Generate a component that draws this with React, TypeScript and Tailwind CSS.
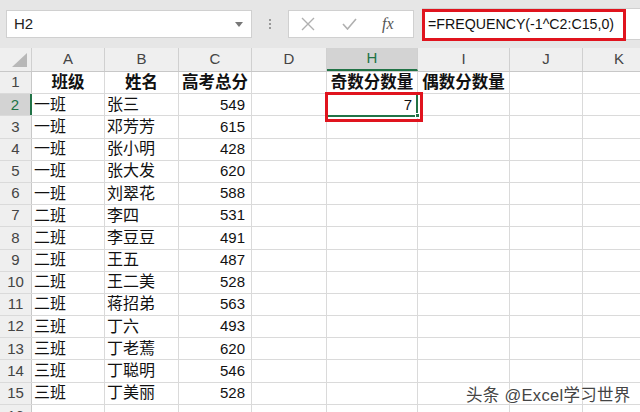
import React from 'react';

const cols = [
  { key: 'A', w: 'w-[73px]' },
  { key: 'B', w: 'w-[74px]' },
  { key: 'C', w: 'w-[73px]' },
  { key: 'D', w: 'w-[75px]' },
  { key: 'H', w: 'w-[91px]' },
  { key: 'I', w: 'w-[92px]' },
  { key: 'J', w: 'w-[73px]' },
  { key: 'K', w: 'w-[73px]' },
];

const data: [string, string, number][] = [
  ['一班', '张三', 549],
  ['一班', '邓芳芳', 615],
  ['一班', '张小明', 428],
  ['一班', '张大发', 620],
  ['一班', '刘翠花', 588],
  ['二班', '李四', 531],
  ['二班', '李豆豆', 491],
  ['二班', '王五', 487],
  ['二班', '王二美', 528],
  ['二班', '蒋招弟', 563],
  ['三班', '丁六', 493],
  ['三班', '丁老蔫', 620],
  ['三班', '丁聪明', 546],
  ['三班', '丁美丽', 528],
];

const font = { fontFamily: '"Liberation Sans", "Noto Sans CJK SC", sans-serif' };

const Cell: React.FC<{ w: string; className?: string; children?: React.ReactNode }> = ({ w, className = '', children }) => (
  <div className={`${w} shrink-0 h-full border-r border-[#dadada] flex items-center overflow-visible whitespace-nowrap ${className}`}>
    {children}
  </div>
);

const FormulaBar: React.FC = () => (
  <div className="h-[48px] bg-[#e6e6e6] flex items-start pt-[10px] pl-[6px]">
    <div className="w-[246px] h-[28px] bg-white border border-[#d0d0d0] flex items-center justify-between pl-[7px] pr-[8px]">
      <span className="text-[15px] text-[#222]">H2</span>
      <svg width="8" height="5" viewBox="0 0 8 5"><path d="M0 0h8L4 5z" fill="#777" /></svg>
    </div>
    <div className="w-[36px] h-[28px] flex flex-col items-center justify-center gap-[2px]">
      <div className="w-[2px] h-[2px] bg-[#999]" />
      <div className="w-[2px] h-[2px] bg-[#999]" />
      <div className="w-[2px] h-[2px] bg-[#999]" />
    </div>
    <div className="w-[126px] h-[28px] bg-white border border-[#d0d0d0] flex items-center">
      <svg className="ml-[12px]" width="14" height="14" viewBox="0 0 14 14">
        <path d="M1 1l12 12M13 1L1 13" stroke="#b0b0b0" strokeWidth="1.4" />
      </svg>
      <svg className="ml-[27px]" width="15" height="12" viewBox="0 0 15 12">
        <path d="M1 6l4.5 5L14 1" stroke="#b0b0b0" strokeWidth="1.6" fill="none" />
      </svg>
      <span className="ml-[25px] text-[16px] italic text-[#555]" style={{ fontFamily: '"Liberation Serif", serif' }}>
        fx
      </span>
    </div>
    <div className="ml-[8px] flex-1 -mt-[2px] h-[32px] bg-white border-y border-[#d0d0d0] flex">
      <div className="w-[204px] h-[32px] border-[3px] border-[#e0141e] flex items-center pl-[3px]">
        <span className="text-[14.2px] text-[#111]">=FREQUENCY(-1^C2:C15,0)</span>
      </div>
    </div>
  </div>
);

const App: React.FC = () => {
  return (
    <div className="w-[640px] h-[412px] overflow-hidden bg-white relative" style={font}>
      <FormulaBar />
      {/* column headers */}
      <div className="h-[24px] flex bg-[#efefef] border-b border-[#c8c8c8]">
        <div className="w-[32px] shrink-0 h-full border-r border-[#d0d0d0] flex items-end justify-end pr-[4px] pb-[4px]">
          <svg width="15" height="14" viewBox="0 0 15 14"><path d="M15 0v14H0z" fill="#b8b8b8" /></svg>
        </div>
        {cols.map((c) => (
          <div
            key={c.key}
            className={`${c.w} shrink-0 h-full border-r border-[#d0d0d0] flex items-center justify-center text-[15px] ${
              c.key === 'H' ? 'bg-[#d3d3d3] text-[#217346] border-b-2 border-b-[#217346]' : 'text-[#444]'
            }`}
          >
            {c.key}
          </div>
        ))}
      </div>
      {/* row 1 */}
      <div className="h-[22.2px] flex border-b border-[#dadada] text-[16.5px] font-bold text-[#111]">
        <div className="w-[32px] shrink-0 h-full bg-[#efefef] border-r border-[#c8c8c8] flex items-center justify-center text-[15px] font-normal text-[#444]">1</div>
        <Cell w="w-[73px]" className="justify-center">班级</Cell>
        <Cell w="w-[74px]" className="justify-center">姓名</Cell>
        <Cell w="w-[73px]" className="justify-center">高考总分</Cell>
        <Cell w="w-[75px]" />
        <Cell w="w-[91px]" className="justify-center">奇数分数量</Cell>
        <Cell w="w-[92px]" className="justify-center">偶数分数量</Cell>
        <Cell w="w-[73px]" />
        <Cell w="w-[73px]" />
      </div>
      {data.map(([cls, name, score], i) => {
        const r = i + 2;
        return (
          <div key={r} className="h-[22.2px] flex border-b border-[#dadada] text-[16px] text-[#111]">
            <div
              className={`w-[32px] shrink-0 h-full flex items-center justify-center text-[15px] ${
                r === 2 ? 'bg-[#d3d3d3] text-[#217346] border-r-2 border-[#217346]' : 'bg-[#efefef] text-[#444] border-r border-[#c8c8c8]'
              }`}
            >
              {r}
            </div>
            <Cell w="w-[73px]" className="pl-[2px]">{cls}</Cell>
            <Cell w="w-[74px]" className="pl-[2px]">{name}</Cell>
            <Cell w="w-[73px]" className="justify-end pr-[6px] text-[15px]">{score}</Cell>
            <Cell w="w-[75px]" />
            {r === 2 ? (
              <div className="w-[91px] shrink-0 h-full border-r border-[#dadada] relative flex items-center justify-end pr-[5px] text-[15px]">
                7
                <div className="absolute -left-[1px] -top-[1px] w-[92px] h-[24px] border-2 border-[#217346]" />
                <div className="absolute -right-[3px] -bottom-[3px] w-[5px] h-[5px] bg-[#217346] border border-white" />
                <div className="absolute -left-[2px] -top-[2px] w-[98px] h-[30px] border-[3px] border-[#e0141e]" />
              </div>
            ) : (
              <Cell w="w-[91px]" />
            )}
            <Cell w="w-[92px]" />
            <Cell w="w-[73px]" />
            <Cell w="w-[73px]" />
          </div>
        );
      })}
      <div className="h-[22px] flex">
        <div className="w-[32px] shrink-0 h-full bg-[#efefef] border-r border-[#c8c8c8] flex items-center justify-center text-[15px] text-[#444]">16</div>
        {cols.map((c) => (
          <Cell key={c.key} w={c.w} />
        ))}
      </div>
      <div
        className="absolute left-[466px] top-[383px] text-[16.5px] tracking-[0.3px] text-[#444] whitespace-nowrap"
        style={{ textShadow: '0 0 2px #fff, 0 0 2px #fff, 0 0 1px #fff' }}
      >
        头条 @Excel学习世界
      </div>
    </div>
  );
};

export default App;
